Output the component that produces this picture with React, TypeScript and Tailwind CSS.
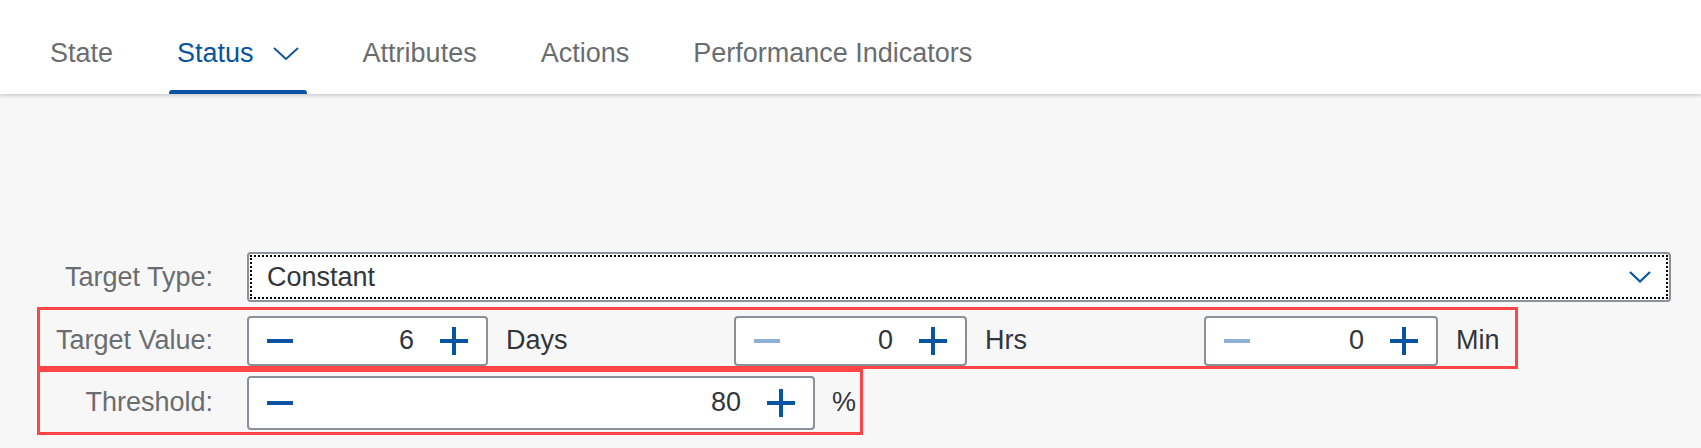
import React from "react"

const tabs = ["State", "Status", "Attributes", "Actions", "Performance Indicators"]

function Minus({ disabled }: { disabled?: boolean }) {
  return (
    <svg width="28" height="28" viewBox="0 0 28 28" className="shrink-0">
      <path d="M1 14h26" stroke={disabled ? "#8fb0d6" : "#0854a0"} strokeWidth="4" />
    </svg>
  )
}

function Plus() {
  return (
    <svg width="30" height="30" viewBox="0 0 30 30" className="shrink-0">
      <path d="M1 15h28M15 1v28" stroke="#0854a0" strokeWidth="4" />
    </svg>
  )
}

function Stepper({
  value,
  width,
  height = "h-[50px]",
  minDisabled,
}: {
  value: string
  width: string
  height?: string
  minDisabled?: boolean
}) {
  return (
    <div
      className={`flex items-center ${width} ${height} bg-white border-2 border-[#89919a] rounded-[4px] pl-[17px] pr-[17px]`}
    >
      <Minus disabled={minDisabled} />
      <span className="flex-1 text-right text-[#32363a]">{value}</span>
      <span className="ml-[25px]">
        <Plus />
      </span>
    </div>
  )
}

export default function App() {
  return (
    <div
      className="w-[1701px] h-[448px] bg-[#f7f7f7] overflow-hidden"
      style={{ fontFamily: '"Liberation Sans", Arial, sans-serif' }}
    >
      {/* Tab bar */}
      <div className="h-[94px] bg-white shadow-[0_2px_3px_rgba(0,0,0,0.16)] relative z-10 flex items-stretch pl-[42px] gap-[48px] text-[27px]">
        {tabs.map((tab) => {
          const active = tab === "Status"
          return (
            <div
              key={tab}
              className={`relative flex items-center px-[8px] pt-[12px] ${
                active ? "text-[#0854a0]" : "text-[#6a6d70]"
              }`}
            >
              <span>{tab}</span>
              {active && (
                <svg width="26" height="14" viewBox="0 0 26 14" className="ml-[19px] mt-[2px]">
                  <path d="M1 1l12 11L25 1" fill="none" stroke="#0854a0" strokeWidth="1.8" />
                </svg>
              )}
              {active && (
                <span className="absolute left-0 right-0 bottom-0 h-[4px] bg-[#0854a0] rounded-t-[3px]" />
              )}
            </div>
          )
        })}
      </div>

      {/* Form */}
      <div className="pt-[158px] pl-[37px] text-[27px]">
        {/* Target Type */}
        <div className="flex items-center border-[3px] border-transparent h-[56px] -mt-[3px]">
          <div className="w-[173px] text-right text-[#6a6d70]">Target Type:</div>
          <div className="ml-[34px] w-[1424px] h-[50px] bg-white border-2 border-[#89919a] rounded-[4px] p-[1px]">
            <div className="h-full border-2 border-dotted border-black flex items-center pl-[15px] pr-[15px]">
              <span className="flex-1 text-[#32363a]">Constant</span>
              <svg width="22" height="12" viewBox="0 0 22 12">
                <path d="M1 1l10 9.5L21 1" fill="none" stroke="#0854a0" strokeWidth="2.2" />
              </svg>
            </div>
          </div>
        </div>

        {/* Target Value */}
        <div className="mt-[2px] w-[1481px] h-[62px] border-[3px] border-[#ff4545] flex items-center pt-[5px]">
          <div className="w-[173px] text-right text-[#6a6d70]">Target Value:</div>
          <div className="ml-[34px] flex items-center">
            <div className="w-[487px] flex items-center">
              <Stepper value="6" width="w-[241px]" />
              <span className="ml-[18px] text-[#32363a]">Days</span>
            </div>
            <div className="w-[470px] flex items-center">
              <Stepper value="0" width="w-[233px]" minDisabled />
              <span className="ml-[18px] text-[#32363a]">Hrs</span>
            </div>
            <div className="flex items-center">
              <Stepper value="0" width="w-[234px]" minDisabled />
              <span className="ml-[18px] text-[#32363a]">Min</span>
            </div>
          </div>
        </div>

        {/* Threshold */}
        <div className="w-[826px] h-[66px] border-[3px] border-[#ff4545] flex items-center pt-[1px]">
          <div className="w-[173px] text-right text-[#6a6d70]">Threshold:</div>
          <div className="ml-[34px] flex items-center">
            <Stepper value="80" width="w-[568px]" height="h-[54px]" />
            <span className="ml-[17px] text-[#32363a]">%</span>
          </div>
        </div>
      </div>
    </div>
  )
}
